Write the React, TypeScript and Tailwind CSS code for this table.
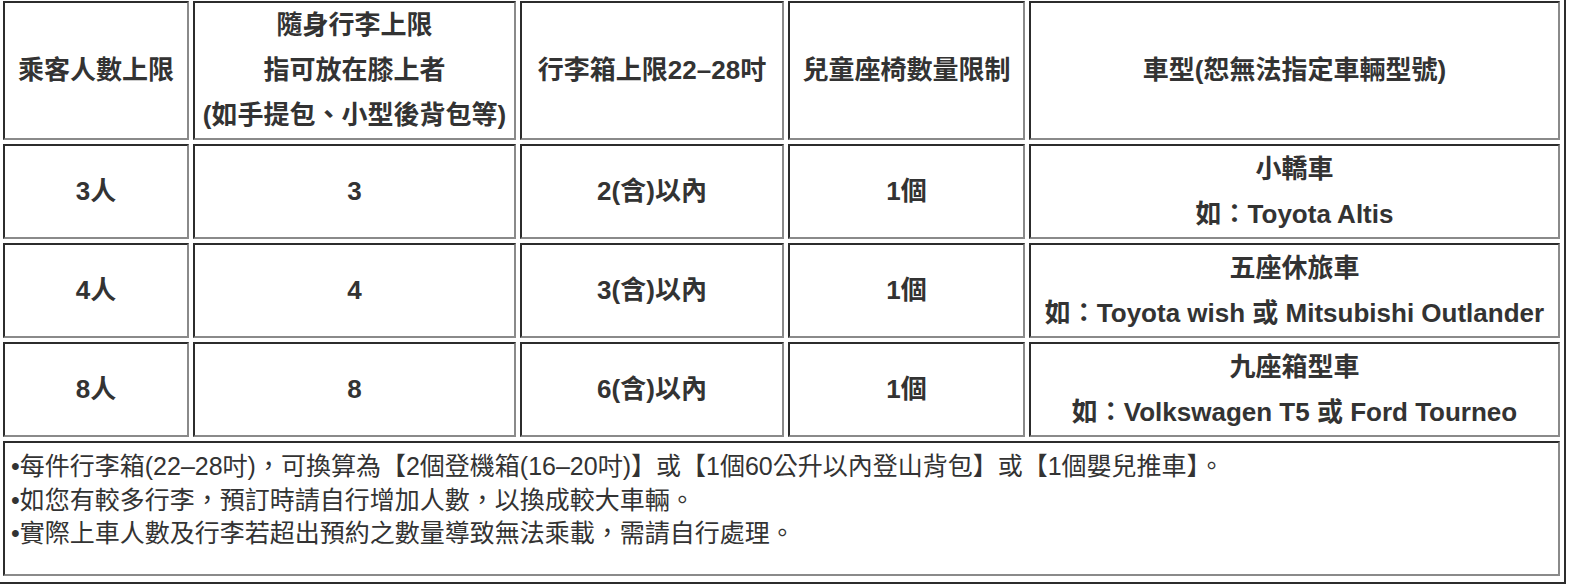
import React from 'react'

const font = { fontFamily: '"Liberation Sans", "Noto Sans CJK TC", sans-serif' }

const cell =
  'border-2 border-t-[#2c2c2c] border-l-[#2c2c2c] border-r-[#8a8a8a] border-b-[#8a8a8a] px-[4px] text-center align-middle'

const rows = [
  { pax: '3人', carry: '3', bags: '2(含)以內', seats: '1個', car: '小轎車', example: '如：Toyota Altis' },
  { pax: '4人', carry: '4', bags: '3(含)以內', seats: '1個', car: '五座休旅車', example: '如：Toyota wish 或 Mitsubishi Outlander' },
  { pax: '8人', carry: '8', bags: '6(含)以內', seats: '1個', car: '九座箱型車', example: '如：Volkswagen T5 或 Ford Tourneo' },
]

export default function App() {
  return (
    <div className="min-h-screen bg-white overflow-hidden" style={font}>
      {/* Outer table frame (top/left edge is cropped off) */}
      <div className="-mt-[3px] -ml-[1px] w-fit border-r-2 border-b-2 border-[#2c2c2c] pb-[2px]">
        <table className="w-[1565px] table-fixed border-separate border-spacing-[4px] text-[26px] font-bold leading-[45px] text-[#333]">
          <thead>
            <tr className="h-[138px]">
              <th className={`${cell} w-[186px]`}>乘客人數上限</th>
              <th className={`${cell} w-[323px]`}>
                隨身行李上限
                <br />
                指可放在膝上者
                <br />
                (如手提包、小型後背包等)
              </th>
              <th className={`${cell} w-[264px]`}>行李箱上限22–28吋</th>
              <th className={`${cell} w-[237px]`}>兒童座椅數量限制</th>
              <th className={`${cell} w-[531px]`}>車型(恕無法指定車輛型號)</th>
            </tr>
          </thead>
          <tbody>
            {rows.map((r) => (
              <tr key={r.pax} className="h-[95px]">
                <td className={cell}>{r.pax}</td>
                <td className={cell}>{r.carry}</td>
                <td className={cell}>{r.bags}</td>
                <td className={cell}>{r.seats}</td>
                <td className={`${cell} whitespace-nowrap`}>
                  {r.car}
                  <br />
                  {r.example}
                </td>
              </tr>
            ))}
            <tr className="h-[135px]">
              <td
                colSpan={5}
                className="border-2 border-t-[#2c2c2c] border-l-[#2c2c2c] border-r-[#8a8a8a] border-b-[#8a8a8a] pl-[6px] pt-[7px] text-left align-top text-[25px] font-normal leading-[33.5px]"
              >
                •每件行李箱(22–28吋)，可換算為【2個登機箱(16–20吋)】或【1個60公升以內登山背包】或【1個嬰兒推車】。
                <br />
                •如您有較多行李，預訂時請自行增加人數，以換成較大車輛。
                <br />
                •實際上車人數及行李若超出預約之數量導致無法乘載，需請自行處理。
              </td>
            </tr>
          </tbody>
        </table>
      </div>
    </div>
  )
}
